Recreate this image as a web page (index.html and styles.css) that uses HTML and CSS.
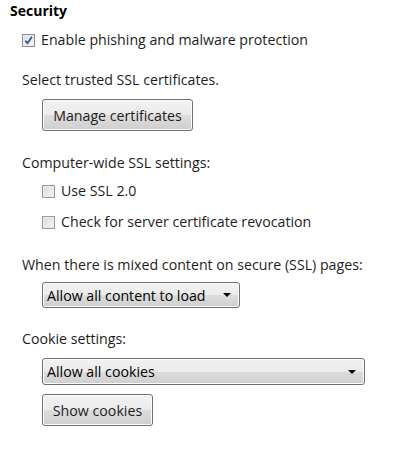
FILE: index.html
```html
<!DOCTYPE html>
<html>
<head>
<meta charset="utf-8">
<link rel="stylesheet" href="styles.css">
</head>
<body>
<div class="page">
  <div class="title">Security</div>
  <div class="body">
    <label class="check row-phish">
      <span class="box checked"><svg width="9" height="9" viewBox="0 0 9 9"><path d="M1.3 4.6 L3.5 7.2 L7.9 0.8" fill="none" stroke="#3d5591" stroke-width="1.8"/></svg></span>
      <span>Enable phishing and malware protection</span>
    </label>
    <div class="text t-select">Select trusted SSL certificates.</div>
    <div class="indent"><button class="btn b-manage">Manage certificates</button></div>
    <div class="text t-computer">Computer-wide SSL settings:</div>
    <label class="check indent row-ssl"><span class="box"></span><span>Use SSL 2.0</span></label>
    <label class="check indent row-rev"><span class="box"></span><span>Check for server certificate revocation</span></label>
    <div class="text t-mixed">When there is mixed content on secure (SSL) pages:</div>
    <div class="indent"><div class="select s-mixed"><span>Allow all content to load</span><span class="arrow"></span></div></div>
    <div class="text t-cookie">Cookie settings:</div>
    <div class="indent"><div class="select s-cookie"><span>Allow all cookies</span><span class="arrow"></span></div></div>
    <div class="indent"><button class="btn b-show">Show cookies</button></div>
  </div>
</div>
</body>
</html>
```
FILE: styles.css
```css
html, body {
  margin: 0;
  padding: 0;
  background: #ffffff;
}
body {
  font-family: "Open Sans", "Noto Sans", sans-serif;
  font-size: 14.2px;
  color: #1e1e1e;
}
.page {
  display: flex;
  flex-direction: column;
  width: 403px;
  height: 457px;
}
.title {
  font-weight: bold;
  font-size: 14px;
  line-height: 20px;
  margin-top: 1px;
  padding-left: 10px;
  color: #000;
}
.body {
  display: flex;
  flex-direction: column;
  align-items: flex-start;
  padding-left: 22px;
}
.indent {
  margin-left: 20px;
}
.text, .check {
  line-height: 20px;
  height: 20px;
}
.check {
  display: flex;
  align-items: center;
  gap: 6px;
}
.box {
  width: 11px;
  height: 11px;
  border: 1px solid #9a9a9a;
  background: linear-gradient(135deg, #dcdcdc, #f4f4f4);
  display: flex;
  align-items: center;
  justify-content: center;
  box-shadow: inset 0 0 0 1px #ececec;
}
.box.checked {
  border-color: #8e8f8f;
  background: linear-gradient(135deg, #d9dde6, #f7f8fa);
}
.row-phish { margin-top: 9px; }
.t-select { margin-top: 20px; }
.btn {
  font-family: inherit;
  font-size: 14.2px;
  color: #1e1e1e;
  border: 1px solid #707070;
  border-radius: 3px;
  background: linear-gradient(#f2f2f2 0%, #ebebeb 50%, #dddddd 51%, #cfcfcf 100%);
  box-shadow: inset 0 0 0 1px #fcfcfc;
  height: 32px;
  padding: 0;
  display: flex;
  align-items: center;
  justify-content: center;
}
.b-manage { margin-top: 9px; width: 151px; }
.t-computer { margin-top: 22px; }
.row-ssl { margin-top: 8px; }
.row-rev { margin-top: 11px; }
.t-mixed { margin-top: 23px; }
.select {
  height: 26px;
  border: 1px solid #707070;
  border-radius: 3px;
  background: linear-gradient(#f2f2f2 0%, #ebebeb 50%, #dddddd 51%, #cfcfcf 100%);
  box-shadow: inset 0 0 0 1px #fcfcfc;
  box-sizing: border-box;
  display: flex;
  align-items: center;
  justify-content: space-between;
  padding: 0 8px 0 4px;
  color: #000;
}
.arrow {
  width: 0;
  height: 0;
  border-left: 4px solid transparent;
  border-right: 4px solid transparent;
  border-top: 4px solid #000;
}
.s-mixed { margin-top: 7px; width: 198px; }
.t-cookie { margin-top: 21px; }
.s-cookie { margin-top: 9px; width: 323px; height: 27px; }
.b-show { margin-top: 9px; width: 111px; }
```
